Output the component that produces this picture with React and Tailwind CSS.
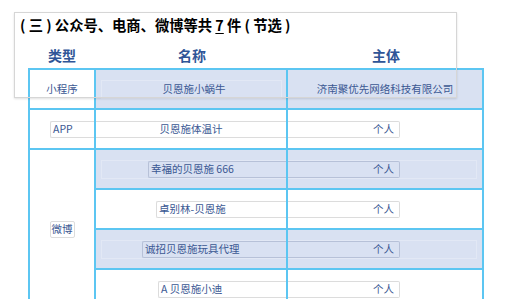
import React from 'react';

const weiboRows = [
  { name: '幸福的贝恩施 666', shaded: true, offset: 'ml-[46px]' },
  { name: '卓别林-贝恩施', shaded: false, offset: 'ml-[60px]' },
  { name: '诚招贝恩施玩具代理', shaded: true, offset: 'ml-[40px]' },
  { name: 'A 贝恩施小迪', shaded: false, offset: 'ml-[62px]' },
];

const NameCell = ({ row }) => {
  if (row.shaded) {
    return (
      <div className="bg-[#d9e1f2] flex items-center">
        <div className="ml-[5px] flex-1 h-[19px] border-y border-l border-[#e2e8f5] flex items-center">
          <div className={`${row.offset} flex-1 h-[17px] border-y border-l border-[#b7c1d8] rounded-l-[2px] flex items-center pl-[2px]`}>
            {row.name}
          </div>
        </div>
      </div>
    );
  }
  return (
    <div className="bg-white flex items-center">
      <div className={`${row.offset} flex-1 h-[17px] border-y border-l border-[#dcdcdc] rounded-l-[2px] flex items-center pl-[2px]`}>
        {row.name}
      </div>
    </div>
  );
};

const OwnerCell = ({ shaded }) => {
  if (shaded) {
    return (
      <div className="bg-[#d9e1f2] flex items-center">
        <div className="mr-[5px] flex-1 h-[19px] border-y border-r border-[#e2e8f5] flex items-center">
          <div className="w-[112px] h-[17px] border-y border-r border-[#b7c1d8] rounded-r-[2px] flex items-center justify-end pr-[5px]">
            个人
          </div>
        </div>
      </div>
    );
  }
  return (
    <div className="bg-white flex items-center">
      <div className="w-[112px] h-[17px] border-y border-r border-[#dcdcdc] rounded-r-[2px] flex items-center justify-end pr-[5px]">
        个人
      </div>
    </div>
  );
};

export default function App() {
  return (
    <div className="relative w-[514px] h-[299px] overflow-hidden bg-white font-['Noto_Sans_CJK_SC',sans-serif]">
      {/* title frame lying over the table */}
      <div className="absolute left-[14px] top-[12px] w-[443px] h-[86px] border border-[#d6d6d6] shadow-[0_1px_2px_rgba(0,0,0,0.12)] z-10 pointer-events-none">
        <p className="ml-[5px] mt-[2px] text-[14.3px] font-bold leading-[20px] text-black whitespace-nowrap">
          ( 三 ) 公众号、电商、微博等共 <span className="underline underline-offset-2">7</span> 件 ( 节选 )
        </p>
      </div>

      <div className="pl-[28px] pt-[42px]">
        {/* header */}
        <div className="grid grid-cols-[68px_192px_196px] h-[26px] items-center text-center text-[14px] font-bold text-[#2f5597]">
          <span>类型</span>
          <span>名称</span>
          <span>主体</span>
        </div>

        {/* table */}
        <div className="w-[456px] bg-[#5cc6f2] p-[2px] grid grid-cols-[64px_190px_194px] auto-rows-[38px] gap-[2px] text-[10.5px] text-[#3b5893]">
          {/* 小程序 */}
          <div className="bg-white flex items-center justify-center">小程序</div>
          <div className="bg-[#d9e1f2] flex items-center">
            <div className="ml-[5px] w-[181px] h-[19px] border-y border-l border-r border-[#e2e8f5] flex items-center justify-center">
              <span className="ml-[5px]">贝恩施小蜗牛</span>
            </div>
          </div>
          <div className="bg-[#d9e1f2] flex items-center justify-center">济南聚优先网络科技有限公司</div>

          {/* APP */}
          <div className="bg-white flex items-center">
            <div className="ml-[20px] flex-1 h-[17px] border-y border-l border-[#dcdcdc] rounded-l-[2px] flex items-center pl-[2px]">
              APP
            </div>
          </div>
          <div className="bg-white flex items-center">
            <div className="flex-1 h-[17px] border-y border-[#dcdcdc] flex items-center justify-center">
              贝恩施体温计
            </div>
          </div>
          <OwnerCell shaded={false} />

          {/* 微博 */}
          <div className="row-span-4 bg-white flex items-center justify-center">
            <div className="h-[17px] px-[1px] border border-[#dcdcdc] rounded-[2px] flex items-center">微博</div>
          </div>
          {weiboRows.map((row) => (
            <React.Fragment key={row.name}>
              <NameCell row={row} />
              <OwnerCell shaded={row.shaded} />
            </React.Fragment>
          ))}
        </div>
      </div>
    </div>
  );
}
